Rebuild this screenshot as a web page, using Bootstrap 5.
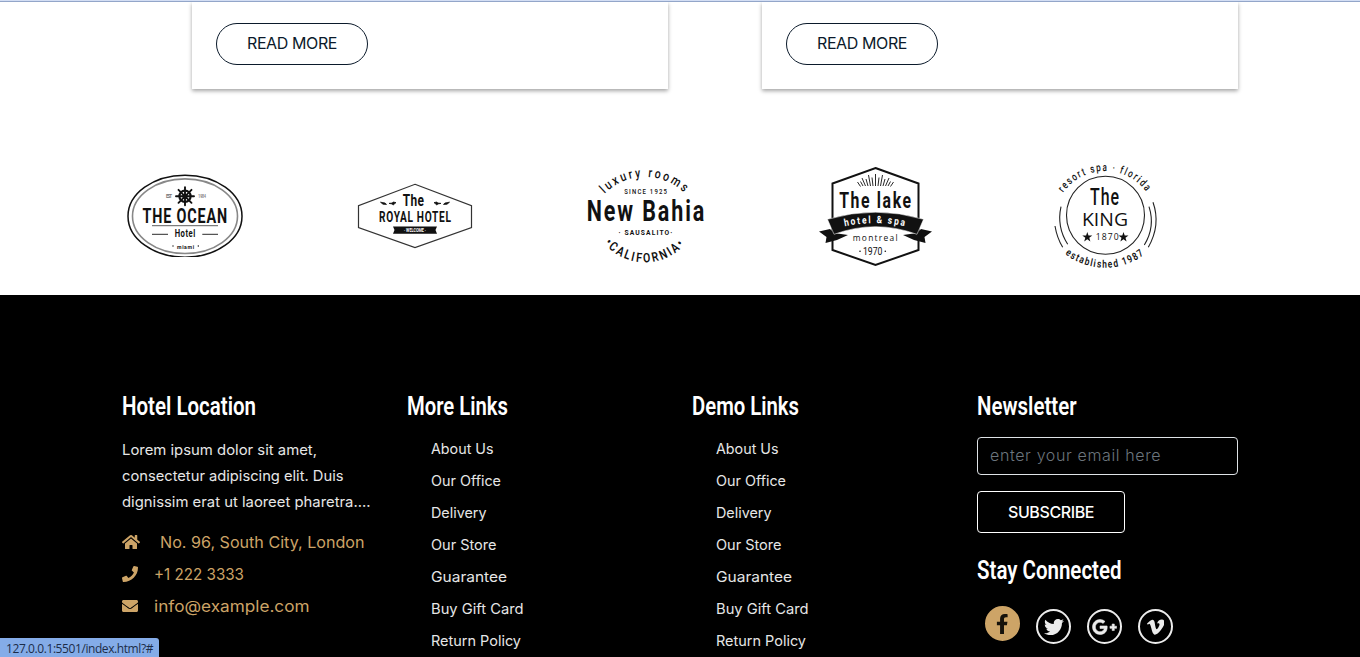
<!DOCTYPE html>
<html lang="en">
<head>
<meta charset="utf-8">
<meta name="viewport" content="width=device-width, initial-scale=1">
<title>Hotel</title>
<link href="https://cdn.jsdelivr.net/npm/bootstrap@5.3.0/dist/css/bootstrap.min.css" rel="stylesheet">
<style>
  body { font-family: Inter, "Open Sans", sans-serif; height: 657px; overflow: hidden; background: #fff; }
  .topline { height: 2px; background: #d3def4; border-bottom: 1px solid #93a6c9; }
  .room-card { margin-left: 70px; height: 87px; padding: 21px 24px; box-shadow: 0 2px 4px rgba(0,0,0,.36); clip-path: inset(0 -8px -8px -8px); }
  .btn-room { width: 152px; height: 42px; padding: 0; border: 1px solid #0b1a2b; color: #0b1a2b; line-height: 39px; }
  .brands { width: 1150px; margin-left: 70px; padding-top: 63px; height: 206px; }
  .brands svg { width: 130px; height: 130px; overflow: visible; font-family: Roboto, sans-serif; font-weight: 700; fill: #111; }
  .site-footer { height: 362px; padding-top: 96px; background: #000; color: #e6e6e6; }
  .foot-title { font: 600 26px/30px Roboto, sans-serif; color: #fff; margin: 0; white-space: nowrap; }
  .foot-text { font-size: 14.4px; line-height: 26px; margin: 16px 0 0; white-space: nowrap; }
  .foot-links { margin: 12px 0 0; padding-left: 24px; list-style: none; font-size: 14.3px; line-height: 32px; white-space: nowrap; }
  .foot-links a { color: #e6e6e6; text-decoration: none; }
  .contact-list { margin-top: 11px; color: #cda467; font-size: 16px; line-height: 32px; white-space: nowrap; }
  .contact-list svg { height: 16px; fill: #cda467; }
  .mail-field { margin-top: 16px; width: 261px; height: 38px; padding: 5px 12px 7px; border-radius: 4px; background: #000 !important; border: 1px solid #dee2e6; letter-spacing: .63px; font-weight: 300; }
  .mail-field::placeholder { color: #6c757d; }
  .btn-sub { margin-top: 16px; width: 148px; height: 42px; padding: 0; border: 1px solid #fff; border-radius: 4px; color: #fff; font-weight: 500; line-height: 39px; }
  .stay { margin-top: 22px; }
  .social { margin: 21px 0 0 8px; gap: 16px; }
  .social a { width: 35px; height: 35px; border: 2px solid #ececec; border-radius: 50%; margin-top: 3px; }
  .social a.lit { background: #cda467; border-color: #cda467; margin-top: 0; }
  .social svg { height: 20px; fill: #ececec; }
  .social .lit svg { fill: #16120b; }
  .status { left: 0; bottom: 0; width: 159px; height: 19px; background: #84ace8; color: #1c2c48; border-top-right-radius: 3px; font: 12px/21px "Open Sans", sans-serif; padding-left: 6px; white-space: nowrap; }
  .fit, .squeeze { display: inline-block; white-space: nowrap; transform-origin: 0 50%; }
  .home-label { margin-left: 20px; }
</style>
</head>
<body>
<div class="topline"></div>

<section class="container">
  <div class="row">
    <div class="col-6"><div class="room-card bg-white"><a href="#" class="btn btn-room rounded-pill"><span class="fit" data-w="90">READ MORE</span></a></div></div>
    <div class="col-6"><div class="room-card bg-white"><a href="#" class="btn btn-room rounded-pill"><span class="fit" data-w="90">READ MORE</span></a></div></div>
  </div>
</section>

<section class="brands d-flex justify-content-around align-items-start">
  <svg viewBox="-65 -65 130 130">
    <clipPath id="oc"><rect x="-65" y="-65" width="130" height="105"/></clipPath>
    <g clip-path="url(#oc)" fill="none"><ellipse cx="0" cy="-.8" rx="57" ry="41" stroke="#111" stroke-width="1.5"/><ellipse cx="0" cy="-.8" rx="52.5" ry="37.3" stroke="#888" stroke-width="1.6"/></g>
    <g transform="translate(0 -20.7)" stroke="#111" fill="none"><circle r="5.6" stroke-width="2.2"/><circle r="2" fill="#111"/><path d="M0-9V9M-9 0H9M-6.5-6.5L6.5 6.5M6.5-6.5L-6.5 6.5" stroke-width="1.9" stroke-linecap="round"/></g>
    <text x="-19" y="-18.6" font-size="4.5" fill="#777" textLength="6">EST</text><text x="13.3" y="-18.6" font-size="4.5" fill="#777" textLength="7.5" lengthAdjust="spacingAndGlyphs">1984</text>
    <text x="-42.5" y="6" font-size="20.5" letter-spacing="1.2" textLength="85.5" lengthAdjust="spacingAndGlyphs">THE OCEAN</text>
    <path d="M-33 8.7H33" stroke="#333" stroke-width=".8"/><path d="M-33 17.3H-17M17.3 17.3H33" stroke="#555" stroke-width="1.3"/>
    <text x="-10.3" y="20" font-size="10.5" letter-spacing=".7" textLength="21" lengthAdjust="spacingAndGlyphs">Hotel</text>
    <text x="-8" y="31.5" font-size="5.2" textLength="17">miami</text><circle cx="-12" cy="29" r=".7"/><circle cx="13.3" cy="29" r=".7"/>
  </svg>
  <svg viewBox="-65 -65 130 130">
    <path d="M0-32.7L56.5-11.3V10.5L0 30.5-56.5 10.5V-11.3Z" fill="none" stroke="#333" stroke-width="1.2"/>
    <text x="-12.3" y="-10.7" font-size="16" letter-spacing=".6" textLength="21.8" lengthAdjust="spacingAndGlyphs">The</text>
    <path d="M-34.5-14.8L-30-14-28.5-12.6-32-12.8ZM-19-14.4L-22-15 -22.5-14-26-13.6-22.5-13 -22-11.9ZM34.5-14.8L30-14 28.5-12.6 32-12.8ZM19-14.4L22-15 22.5-14 26-13.6 22.5-13 22-11.9Z" stroke="#111" stroke-width=".8"/>
    <text x="-36" y="4.7" font-size="14.5" letter-spacing="1" textLength="72.6" lengthAdjust="spacingAndGlyphs">ROYAL HOTEL</text>
    <path d="M-22 9.5H22L20.5 13 22 16.8H-22L-20.5 13Z"/><text x="-11" y="15" font-size="4.8" fill="#fff" textLength="22" lengthAdjust="spacingAndGlyphs">· WELCOME ·</text>
  </svg>
  <svg viewBox="-65 -65 130 130">
    <path id="b1" d="M-57 17A57 57 0 0 1 57 17" fill="none"/><path id="b2" d="M-53-7.6A53 53 0 0 0 53-7.6" fill="none"/>
    <text font-size="13.2" font-weight="500" text-anchor="middle" letter-spacing="3" textLength="90" lengthAdjust="spacingAndGlyphs"><textPath href="#b1" startOffset="50%" textLength="90" lengthAdjust="spacingAndGlyphs">luxury rooms</textPath></text>
    <text x="-20.8" y="-23" font-size="7.8" font-weight="500" letter-spacing="1.6" textLength="44" lengthAdjust="spacingAndGlyphs">SINCE 1925</text>
    <text x="-58.3" y="4" font-size="29.3" letter-spacing="2.6" textLength="119.5" lengthAdjust="spacingAndGlyphs">New Bahia</text>
    <text x="-26.5" y="18.3" font-size="7.8" letter-spacing="1.3" textLength="55" lengthAdjust="spacingAndGlyphs">· SAUSALITO·</text>
    <text font-size="13" font-weight="600" text-anchor="middle" letter-spacing="2.6" textLength="93" lengthAdjust="spacingAndGlyphs"><textPath href="#b2" startOffset="50%" textLength="93" lengthAdjust="spacingAndGlyphs">•CALIFORNIA•</textPath></text>
  </svg>
  <svg viewBox="-65 -65 130 130">
    <path d="M.5-49L43.5-33.5V33L.5 48-42.5 33V-33.5Z" fill="none" stroke="#111" stroke-width="2"/>
    <path d="M.5-43V-31M-3-39.5L-2-31M4-39.5L3-31M-6.5-42L-4.5-31M7.5-42L5.5-31M-9-38L-7-31M10-38L8-31M-13-39L-9.5-31M14-39L10.5-31M-14.5-35.5L-12-31M15.5-35.5L13-31M-17.5-35L-14.5-30.5M18.5-35L15.5-30.5" stroke="#111" stroke-width=".9"/>
    <text x="-35.8" y="-9" font-size="21.5" letter-spacing="2.2" textLength="73.5" lengthAdjust="spacingAndGlyphs">The lake</text>
    <path d="M-56 14.5L-45 12-41 16-27 18 -38 23-49.5 26-48.5 20ZM57 14.5L46 12 42 16 28 18 39 23 50.5 26 49.5 20Z"/>
    <path d="M-47.5 2.3Q.5-12 48.5 2.3L42 17.3Q.5 2-41 17.3Z" stroke="#fff" stroke-width=".5"/>
    <path id="l1" d="M-45 13.2Q.5-1 46 13.2" fill="none"/>
    <text font-size="10.2" fill="#fff" text-anchor="middle" letter-spacing="2.2" textLength="62" lengthAdjust="spacingAndGlyphs"><textPath href="#l1" startOffset="50%" textLength="62" lengthAdjust="spacingAndGlyphs">hotel &amp; spa</textPath></text>
    <text x="-22.3" y="24" font-size="8.4" font-weight="400" font-family="Open Sans, sans-serif" textLength="45">montreal</text>
    <text x="-12" y="38" font-size="11" font-weight="400" textLength="19.5" lengthAdjust="spacingAndGlyphs">1970</text><circle cx="-15" cy="34.3" r=".8"/><circle cx="10.3" cy="34.3" r=".8"/>
  </svg>
  <svg viewBox="-65 -65 130 130">
    <circle cx=".5" cy="-1.7" r="39" fill="none" stroke="#222" stroke-width="1.1"/>
    <path id="k1" d="M-51.5 5.5A51.5 51.5 0 0 1 51.5 5.5" fill="none"/><path id="k2" d="M-65.5-14.8A65.5 65.5 0 0 0 65.5-14.8" fill="none"/>
    <text font-size="11" font-weight="500" text-anchor="middle" letter-spacing="2.2" textLength="98" lengthAdjust="spacingAndGlyphs"><textPath href="#k1" startOffset="50%" textLength="98" lengthAdjust="spacingAndGlyphs">resort spa · florida</textPath></text>
    <text font-size="10.6" font-weight="600" text-anchor="middle" letter-spacing="1.7" textLength="86" lengthAdjust="spacingAndGlyphs"><textPath href="#k2" startOffset="50%" textLength="86" lengthAdjust="spacingAndGlyphs">established 1987</textPath></text>
    <text x="-15" y="-12" font-size="24.3" font-weight="500" letter-spacing="1.5" textLength="30" lengthAdjust="spacingAndGlyphs">The</text>
    <text x="-23" y="9.3" font-size="18.6" font-weight="400" font-family="Open Sans, sans-serif" textLength="46" lengthAdjust="spacingAndGlyphs">KING</text>
    <path id="st" d="M-17.7 15l1.2 3.6h3.8l-3 2.2 1.1 3.6-3.1-2.2-3.1 2.2 1.1-3.6-3-2.2h3.8Z"/><use href="#st" x="36.2"/>
    <text x="-9.3" y="22.8" font-size="8.6" font-weight="400" font-family="Open Sans, sans-serif" textLength="23">1870</text>
    <path d="M-50 9Q-48 21-42.3 30.3M-44-10.3Q-48.5 10-37.3 27.3M44-10.3Q50.5 10 39.3 28M48-14.7Q56 8 43.3 30.3" fill="none" stroke="#222" stroke-width="1.1"/>
  </svg>
</section>

<footer class="site-footer">
  <div class="container">
    <div class="row">
      <div class="col-3">
        <h3 class="foot-title"><span class="squeeze" data-w="134">Hotel Location</span></h3>
        <p class="foot-text"><span class="squeeze" data-w="195">Lorem ipsum dolor sit amet,</span><br><span class="squeeze" data-w="221.5">consectetur adipiscing elit. Duis</span><br><span class="squeeze" data-w="248.5">dignissim erat ut laoreet pharetra....</span></p>
        <div class="contact-list">
          <div class="d-flex align-items-center"><svg viewBox="0 0 576 512" width="18"><path d="M280.37 148.26L96 300.11V464a16 16 0 0 0 16 16l112.06-.29a16 16 0 0 0 15.92-16V368a16 16 0 0 1 16-16h64a16 16 0 0 1 16 16v95.64a16 16 0 0 0 16 16.05L464 480a16 16 0 0 0 16-16V300L295.67 148.26a12.19 12.19 0 0 0-15.3 0zM571.6 251.47L488 182.56V44.05a12 12 0 0 0-12-12h-56a12 12 0 0 0-12 12v72.61L318.47 43a48 48 0 0 0-61 0L4.34 251.47a12 12 0 0 0-1.6 16.9l25.5 31A12 12 0 0 0 45.15 301l235.22-193.74a12.19 12.19 0 0 1 15.3 0L530.9 301a12 12 0 0 0 16.9-1.6l25.5-31a12 12 0 0 0-1.7-16.93z"/></svg><span class="squeeze home-label" data-w="204.5">No. 96, South City, London</span></div>
          <div class="d-flex align-items-center"><svg viewBox="0 0 512 512" width="16"><path d="M493.4 24.6l-104-24c-11.3-2.6-22.9 3.3-27.5 13.9l-48 112c-4.2 9.8-1.4 21.3 6.9 28l60.6 49.6c-36 76.7-98.9 140.5-177.2 177.2l-49.6-60.6c-6.8-8.3-18.2-11.1-28-6.9l-112 48C3.9 366.5-2 378.1.6 389.4l24 104C27.1 504.2 36.7 512 48 512c256.1 0 464-207.5 464-464 0-11.2-7.7-20.9-18.6-23.4z"/></svg><span class="squeeze ms-3" data-w="90">+1 222 3333</span></div>
          <div class="d-flex align-items-center"><svg viewBox="0 0 512 512" width="16"><path d="M502.3 190.8c3.9-3.1 9.7-.2 9.7 4.7V400c0 26.5-21.5 48-48 48H48c-26.5 0-48-21.5-48-48V195.6c0-5 5.7-7.8 9.7-4.7 22.4 17.4 52.1 39.5 154.1 113.6 21.1 15.4 56.7 47.8 92.2 47.6 35.7.3 72-32.8 92.3-47.6 102-74.1 131.6-96.3 154-113.7zM256 320c23.2.4 56.6-29.2 73.4-41.4 132.7-96.3 142.8-104.7 173.4-128.7 5.8-4.5 9.2-11.5 9.2-18.9v-19c0-26.5-21.5-48-48-48H48c-26.5 0-48 21.5-48 48v19c0 7.4 3.4 14.3 9.2 18.9 30.6 23.9 40.7 32.4 173.4 128.7 16.8 12.2 50.2 41.8 73.4 41.4z"/></svg><span class="squeeze ms-3" data-w="155.5">info@example.com</span></div>
        </div>
      </div>
      <div class="col-3">
        <h3 class="foot-title"><span class="squeeze" data-w="101">More Links</span></h3>
        <ul class="foot-links">
          <li><a href="#" class="squeeze" data-w="62.5">About Us</a></li><li><a href="#" class="squeeze" data-w="70">Our Office</a></li><li><a href="#" class="squeeze" data-w="55.5">Delivery</a></li><li><a href="#" class="squeeze" data-w="65.5">Our Store</a></li><li><a href="#" class="squeeze" data-w="76">Guarantee</a></li><li><a href="#" class="squeeze" data-w="92.5">Buy Gift Card</a></li><li><a href="#" class="squeeze" data-w="90">Return Policy</a></li>
        </ul>
      </div>
      <div class="col-3">
        <h3 class="foot-title"><span class="squeeze" data-w="107">Demo Links</span></h3>
        <ul class="foot-links">
          <li><a href="#" class="squeeze" data-w="62.5">About Us</a></li><li><a href="#" class="squeeze" data-w="70">Our Office</a></li><li><a href="#" class="squeeze" data-w="55.5">Delivery</a></li><li><a href="#" class="squeeze" data-w="65.5">Our Store</a></li><li><a href="#" class="squeeze" data-w="76">Guarantee</a></li><li><a href="#" class="squeeze" data-w="92.5">Buy Gift Card</a></li><li><a href="#" class="squeeze" data-w="90">Return Policy</a></li>
        </ul>
      </div>
      <div class="col-3">
        <h3 class="foot-title"><span class="squeeze" data-w="99.5">Newsletter</span></h3>
        <input type="email" class="form-control mail-field" placeholder="enter your email here">
        <button class="btn btn-sub d-block"><span class="fit" data-w="86">SUBSCRIBE</span></button>
        <h3 class="foot-title stay"><span class="squeeze" data-w="144.5">Stay Connected</span></h3>
        <div class="social d-flex align-items-start">
          <a href="#" class="lit d-flex align-items-center justify-content-center"><svg viewBox="0 0 320 512"><path d="M279.14 288l14.22-92.66h-88.91v-60.13c0-25.35 12.42-50.06 52.24-50.06h40.42V6.26S260.43 0 225.36 0c-73.22 0-121.08 44.38-121.08 124.72v70.62H22.89V288h81.39v224h100.17V288z"/></svg></a>
          <a href="#" class="d-flex align-items-center justify-content-center"><svg viewBox="0 0 512 512"><path d="M459.37 151.716c.325 4.548.325 9.097.325 13.645 0 138.72-105.583 298.558-298.558 298.558-59.452 0-114.68-17.219-161.137-47.106 8.447.974 16.568 1.299 25.34 1.299 49.055 0 94.213-16.568 130.274-44.832-46.132-.975-84.792-31.188-98.112-72.772 6.498.974 12.995 1.624 19.818 1.624 9.421 0 18.843-1.3 27.614-3.573-48.081-9.747-84.143-51.98-84.143-102.985v-1.299c13.969 7.797 30.214 12.67 47.431 13.319-28.264-18.843-46.781-51.005-46.781-87.391 0-19.492 5.197-37.36 14.294-52.954 51.655 63.675 129.3 105.258 216.365 109.807-1.624-7.797-2.599-15.918-2.599-24.04 0-57.828 46.782-104.934 104.934-104.934 30.213 0 57.502 12.67 76.67 33.137 23.715-4.548 46.456-13.32 66.599-25.34-7.798 24.366-24.366 44.833-46.132 57.827 21.117-2.273 41.584-8.122 60.426-16.243-14.292 20.791-32.161 39.308-52.628 54.253z"/></svg></a>
          <a href="#" class="d-flex align-items-center justify-content-center"><svg viewBox="0 0 640 512"><path stroke="#ececec" stroke-width="14" d="M386.061 228.496c1.834 9.692 3.143 19.384 3.143 31.956C389.204 370.205 315.599 448 204.8 448c-106.084 0-192-85.915-192-192s85.916-192 192-192c51.864 0 95.083 18.859 128.611 50.292l-52.126 50.03c-14.145-13.621-39.028-29.599-76.485-29.599-65.484 0-118.92 54.221-118.92 121.277 0 67.056 53.436 121.277 118.92 121.277 75.961 0 104.513-54.745 108.965-82.773H204.8v-66.009h181.261zm185.406 6.437V179.2h-56.001v55.733h-55.733v56.001h55.733v55.733h56.001v-55.733H627.2v-56.001h-55.733z"/></svg></a>
          <a href="#" class="d-flex align-items-center justify-content-center"><svg viewBox="0 0 448 512"><path d="M447.8 153.6c-2 43.6-32.4 103.3-91.4 179.1-60.9 79.2-112.4 118.8-154.6 118.8-26.1 0-48.2-24.1-66.3-72.3C100.3 250 85.3 174.3 56.2 174.3c-3.4 0-15.1 7.1-35.2 21.1L0 168.2c51.6-45.3 100.9-95.7 131.8-98.5 34.9-3.4 56.3 20.5 64.4 71.5 28.7 181.5 41.4 208.9 93.6 126.7 18.7-29.6 28.8-52.1 30.2-67.6 4.8-45.9-35.8-42.8-63.3-31 22-72.1 64.1-107.1 126.2-105.1 45.8 1.2 67.5 31.1 64.9 89.4z"/></svg></a>
        </div>
      </div>
    </div>
  </div>
</footer>
<div class="status position-absolute"><span class="fit" data-w="147">127.0.0.1:5501/index.html?#</span></div>

<script src="https://cdn.jsdelivr.net/npm/bootstrap@5.3.0/dist/js/bootstrap.bundle.min.js"></script>
<script>
  // .fit tracks a label to its width; .squeeze scales it horizontally.
  document.querySelectorAll('.fit').forEach(function (el) {
    var w = +el.dataset.w, n = el.textContent.length;
    el.style.letterSpacing = ((w - el.getBoundingClientRect().width) / n) + 'px';
  });
  document.querySelectorAll('.squeeze').forEach(function (el) {
    el.style.transform = 'scaleX(' + (+el.dataset.w / el.getBoundingClientRect().width) + ')';
  });
</script>
</body>
</html>
